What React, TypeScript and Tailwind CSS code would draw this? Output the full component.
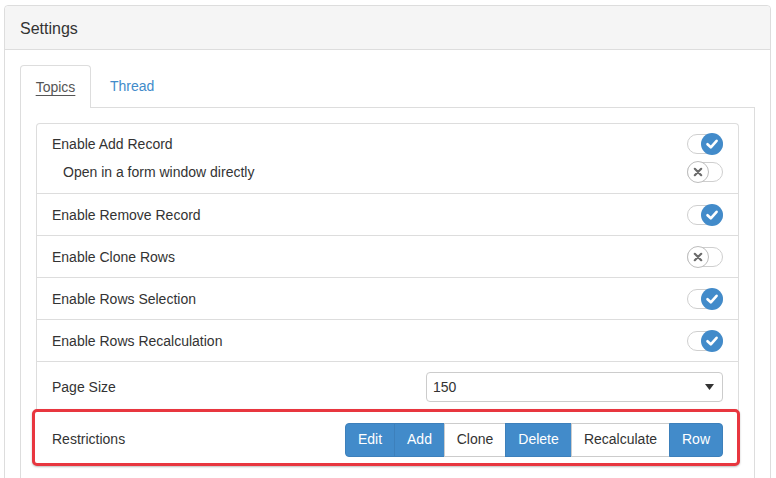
import React from "react";

const Toggle = ({ on }: { on: boolean }) => (
  <div className="relative h-[20px] w-[36px] rounded-full border border-[#cfcfcf] bg-white">
    {on ? (
      <div className="absolute right-[-1px] top-[-2px] flex h-[22px] w-[22px] items-center justify-center rounded-full bg-[#428bca]">
        <svg width="14" height="14" viewBox="0 0 14 14" fill="none">
          <path d="M2.5 7.2 L5.8 10.3 L11.6 3.8" stroke="#fff" strokeWidth="2.6" strokeLinecap="round" strokeLinejoin="round" />
        </svg>
      </div>
    ) : (
      <div className="absolute left-[-1px] top-[-2px] flex h-[22px] w-[22px] items-center justify-center rounded-full border border-[#bdbdbd] bg-white">
        <svg width="10" height="10" viewBox="0 0 10 10" fill="none">
          <path d="M1.8 1.8 L8.2 8.2 M8.2 1.8 L1.8 8.2" stroke="#6b6b6b" strokeWidth="2.2" strokeLinecap="round" />
        </svg>
      </div>
    )}
  </div>
);

const rows = [
  { label: "Enable Remove Record", on: true },
  { label: "Enable Clone Rows", on: false },
  { label: "Enable Rows Selection", on: true },
  { label: "Enable Rows Recalculation", on: true },
];

const buttons = [
  { label: "Edit", active: true, w: "w-[50px]" },
  { label: "Add", active: true, w: "w-[51px]" },
  { label: "Clone", active: false, w: "w-[62px]" },
  { label: "Delete", active: true, w: "w-[67px]" },
  { label: "Recalculate", active: false, w: "w-[99px]" },
  { label: "Row", active: true, w: "w-[54px]" },
];

export default function App() {
  return (
    <div className="h-[478px] w-[776px] overflow-hidden bg-white pl-[4px] pt-[5px] font-['Liberation_Sans',Arial,sans-serif] text-[14px] text-[#333]">
      <div className="w-[767px] rounded-[4px] border border-[#ddd]">
        <div className="h-[44px] rounded-t-[4px] border-b border-[#ddd] bg-[#f5f5f5] px-[15px] pt-[12px] text-[16px] leading-[22px]">
          Settings
        </div>
        <div className="px-[15px] pt-[15px]">
          {/* tabs */}
          <div className="flex h-[43px] border-b border-[#ddd]">
            <div className="-mb-px flex h-[43px] w-[71px] items-center justify-center rounded-t-[4px] border border-b-0 border-[#ddd] bg-white pt-[1px] text-[#555] underline underline-offset-[3px]">
              Topics
            </div>
            <div className="flex h-[42px] items-center px-[19px] text-[#428bca]">Thread</div>
          </div>
          <div className="h-[400px] border-x border-[#ddd] px-[15px] pt-[15px]">
            <div className="rounded-t-[4px] border-x border-t border-[#ddd]">
              <div className="h-[70px] border-b border-[#ddd] px-[15px] pt-[10px]">
                <div className="flex h-[20px] items-center justify-between">
                  <span>Enable Add Record</span>
                  <Toggle on />
                </div>
                <div className="mt-[8px] flex h-[20px] items-center justify-between pl-[11px]">
                  <span>Open in a form window directly</span>
                  <Toggle on={false} />
                </div>
              </div>
              {rows.map((r) => (
                <div key={r.label} className="flex h-[42px] items-center justify-between border-b border-[#ddd] px-[15px] pt-[1px]">
                  <span>{r.label}</span>
                  <Toggle on={r.on} />
                </div>
              ))}
              <div className="flex h-[48px] items-start justify-between px-[15px] pt-[10px]">
                <span className="pt-[5px]">Page Size</span>
                <div className="flex h-[30px] w-[297px] items-center justify-between rounded-[4px] border border-[#ccc] bg-white pl-[6px] pr-[8px]">
                  <span>150</span>
                  <svg width="9" height="6" viewBox="0 0 9 6">
                    <path d="M0 0 H9 L4.5 6 Z" fill="#333" />
                  </svg>
                </div>
              </div>
            </div>
            <div className="-mt-px ml-[-4px] mr-[-1px] flex h-[57px] items-center justify-between rounded-[5px] border-[3px] border-[#e8363f] bg-white pl-[17px] pr-[14px] pt-[4px] shadow-[0_1px_2px_rgba(0,0,0,0.25)]">
              <span>Restrictions</span>
              <div className="flex">
                {buttons.map((b, i) => (
                  <div
                    key={b.label}
                    className={`${b.w} flex h-[34px] items-center justify-center border ${
                      b.active
                        ? "border-[#3d80bb] bg-[#428bca] text-white"
                        : "border-[#ccc] bg-white text-[#333]"
                    } ${i === 0 ? "rounded-l-[4px]" : ""} ${i === buttons.length - 1 ? "rounded-r-[4px]" : ""} ${
                      i > 0 ? "-ml-px" : ""
                    }`}
                  >
                    {b.label}
                  </div>
                ))}
              </div>
            </div>
          </div>
        </div>
      </div>
    </div>
  );
}
